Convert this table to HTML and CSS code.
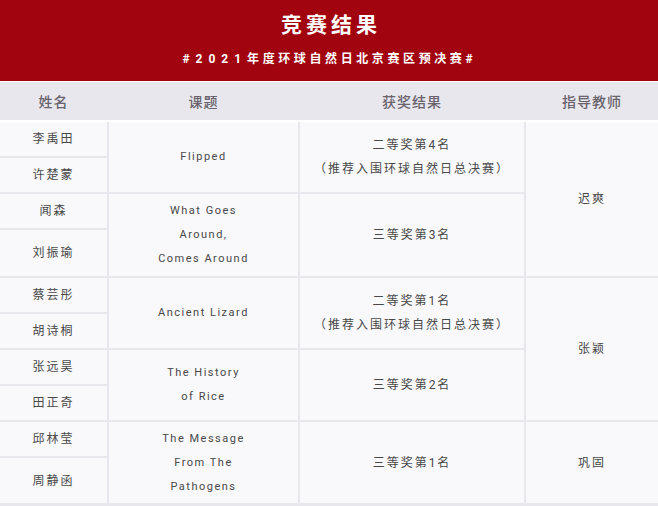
FILE: index.html
```html
<!DOCTYPE html>
<html lang="zh-CN">
<head>
<meta charset="utf-8">
<title>竞赛结果</title>
<link rel="stylesheet" href="styles.css">
</head>
<body>
<header class="banner">
  <h1 class="title">竞赛结果</h1>
  <p class="subtitle"><span class="num">#2021</span>年度环球自然日北京赛区预决赛<span class="num">#</span></p>
</header>
<div class="thead">
  <div class="th">姓名</div>
  <div class="th">课题</div>
  <div class="th">获奖结果</div>
  <div class="th">指导教师</div>
</div>
<div class="tbody">
  <div class="cell name r1">李禹田</div>
  <div class="cell topic r1 s2">Flipped</div>
  <div class="cell result r1 s2">二等奖第4名<br>（推荐入围环球自然日总决赛）</div>
  <div class="cell teacher r1 s4">迟爽</div>
  <div class="cell name r2">许楚蒙</div>

  <div class="cell name r3">闻森</div>
  <div class="cell topic r3 s2">What Goes<br>Around,<br>Comes Around</div>
  <div class="cell result r3 s2">三等奖第3名</div>
  <div class="cell name r4">刘振瑜</div>

  <div class="cell name r5">蔡芸彤</div>
  <div class="cell topic r5 s2">Ancient Lizard</div>
  <div class="cell result r5 s2">二等奖第1名<br>（推荐入围环球自然日总决赛）</div>
  <div class="cell teacher r5 s4">张颖</div>
  <div class="cell name r6">胡诗桐</div>

  <div class="cell name r7">张远昊</div>
  <div class="cell topic r7 s2">The History<br>of Rice</div>
  <div class="cell result r7 s2">三等奖第2名</div>
  <div class="cell name r8">田正奇</div>

  <div class="cell name r9">邱林莹</div>
  <div class="cell topic r9 s2">The Message<br>From The<br>Pathogens</div>
  <div class="cell result r9 s2">三等奖第1名</div>
  <div class="cell teacher r9 s2">巩固</div>
  <div class="cell name r10">周静函</div>
</div>
</body>
</html>
```
FILE: styles.css
```css
* { box-sizing: border-box; }
html, body {
  margin: 0;
  padding: 0;
  background: #ffffff;
}
body {
  width: 658px;
  font-family: Roboto, "Noto Sans CJK SC", sans-serif;
  color: #484848;
}
.banner {
  height: 81px;
  background: #a2040f;
  color: #fff;
  text-align: center;
  padding-top: 10px;
}
.title {
  margin: 0;
  font-size: 21px;
  line-height: 30px;
  font-weight: 700;
  letter-spacing: 4px;
  padding-left: 4px;
}
.subtitle {
  margin: 10px 0 0;
  font-size: 12px;
  line-height: 18px;
  font-weight: 700;
  letter-spacing: 3.6px;
  padding-left: 3px;
}
.subtitle .num { letter-spacing: 6px; }
.thead {
  margin-top: 1px;
  height: 38px;
  background: #e9e7ee;
  display: grid;
  grid-template-columns: 107px 189px 224px 132px;
  column-gap: 2px;
  align-items: center;
  text-align: center;
  font-size: 14px;
  letter-spacing: 1px;
  color: #68636c;
  font-weight: 500;
}
.tbody {
  margin-top: 2px;
  background: #e9e7ee;
  display: grid;
  grid-template-columns: 107px 189px 224px 132px;
  grid-template-rows: 34px 34px 34px 46px 34px 34px 34px 34px 34px 45px;
  gap: 2px;
  padding-bottom: 3px;
}
.cell {
  background: #f9f8fb;
  display: flex;
  align-items: center;
  justify-content: center;
  text-align: center;
  font-size: 12px;
  letter-spacing: 2px;
  line-height: 24px;
}
.name { grid-column: 1; }
.topic { grid-column: 2; font-size: 11px; letter-spacing: 1.5px; }
.result { grid-column: 3; }
.teacher { grid-column: 4; }
.r1 { grid-row-start: 1; }
.r2 { grid-row-start: 2; }
.r3 { grid-row-start: 3; }
.r4 { grid-row-start: 4; }
.r5 { grid-row-start: 5; }
.r6 { grid-row-start: 6; }
.r7 { grid-row-start: 7; }
.r8 { grid-row-start: 8; }
.r9 { grid-row-start: 9; }
.r10 { grid-row-start: 10; }
.s2 { grid-row-end: span 2; }
.s4 { grid-row-end: span 4; }
```
